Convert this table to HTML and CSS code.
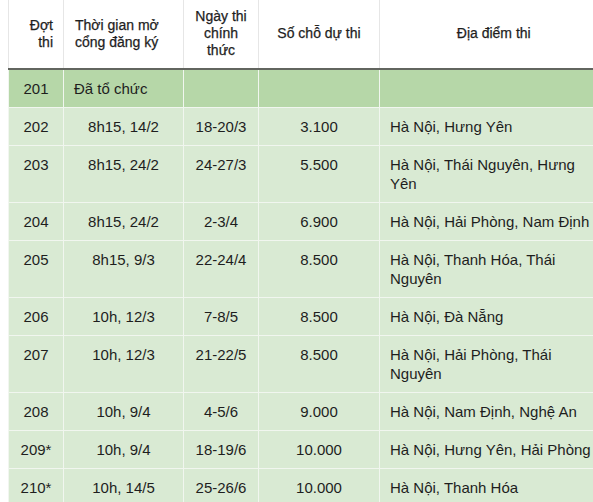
FILE: index.html
```html
<!DOCTYPE html>
<html lang="vi">
<head>
<meta charset="utf-8">
<link rel="stylesheet" href="styles.css">
</head>
<body>
<table class="sched">
  <colgroup>
    <col class="c1"><col class="c2"><col class="c3"><col class="c4"><col class="c5">
  </colgroup>
  <thead>
    <tr>
      <th class="right">Đợt thi</th>
      <th class="left">Thời gian mở cổng đăng ký</th>
      <th>Ngày thi chính thức</th>
      <th>Số chỗ dự thi</th>
      <th>Địa điểm thi</th>
    </tr>
  </thead>
  <tbody>
    <tr class="done"><td>201</td><td class="left">Đã tổ chức</td><td></td><td></td><td></td></tr>
    <tr><td>202</td><td>8h15, 14/2</td><td>18-20/3</td><td>3.100</td><td class="left">Hà Nội, Hưng Yên</td></tr>
    <tr><td>203</td><td>8h15, 24/2</td><td>24-27/3</td><td>5.500</td><td class="left">Hà Nội, Thái Nguyên, Hưng Yên</td></tr>
    <tr><td>204</td><td>8h15, 24/2</td><td>2-3/4</td><td>6.900</td><td class="left">Hà Nội, Hải Phòng, Nam Định</td></tr>
    <tr><td>205</td><td>8h15, 9/3</td><td>22-24/4</td><td>8.500</td><td class="left">Hà Nội, Thanh Hóa, Thái Nguyên</td></tr>
    <tr><td>206</td><td>10h, 12/3</td><td>7-8/5</td><td>8.500</td><td class="left">Hà Nội, Đà Nẵng</td></tr>
    <tr><td>207</td><td>10h, 12/3</td><td>21-22/5</td><td>8.500</td><td class="left">Hà Nội, Hải Phòng, Thái Nguyên</td></tr>
    <tr><td>208</td><td>10h, 9/4</td><td>4-5/6</td><td>9.000</td><td class="left">Hà Nội, Nam Định, Nghệ An</td></tr>
    <tr><td>209*</td><td>10h, 9/4</td><td>18-19/6</td><td>10.000</td><td class="left">Hà Nội, Hưng Yên, Hải Phòng</td></tr>
    <tr><td>210*</td><td>10h, 14/5</td><td>25-26/6</td><td>10.000</td><td class="left">Hà Nội, Thanh Hóa</td></tr>
  </tbody>
</table>
</body>
</html>
```
FILE: styles.css
```css
html, body {
  margin: 0;
  padding: 0;
  overflow: hidden;
  background: #fff;
}
body {
  padding-left: 8px;
  font-family: "Liberation Sans", Arial, sans-serif;
  color: #1e1e1e;
}
.sched {
  border-collapse: collapse;
  table-layout: fixed;
  width: 599px;
}
.c1 { width: 55px; }
.c2 { width: 120px; }
.c3 { width: 75px; }
.c4 { width: 121px; }
.c5 { width: 228px; }
.sched th {
  font-size: 14px;
  font-weight: normal;
  line-height: 17px;
  color: #1e1e1e;
  text-align: center;
  vertical-align: middle;
  padding: 8px 10px 9px;
  height: 51px;
  border-left: 1px solid #e6e6e6;
  border-bottom: 2px solid #62655f;
  -webkit-text-stroke: 0.25px #1e1e1e;
}
.sched td {
  font-size: 15px;
  line-height: 19px;
  text-align: center;
  vertical-align: top;
  padding: 9px 10px;
  border: 1px solid #f1f6ef;
  border-top: 0;
  background: #d9ead3;
}
.sched tr.done td {
  background: #b6d7a8;
}
.sched .left { text-align: left; }
.sched .right { text-align: right; }
.sched th.left { padding-left: 11px; }
.sched td.left { padding-left: 10px; }
```
